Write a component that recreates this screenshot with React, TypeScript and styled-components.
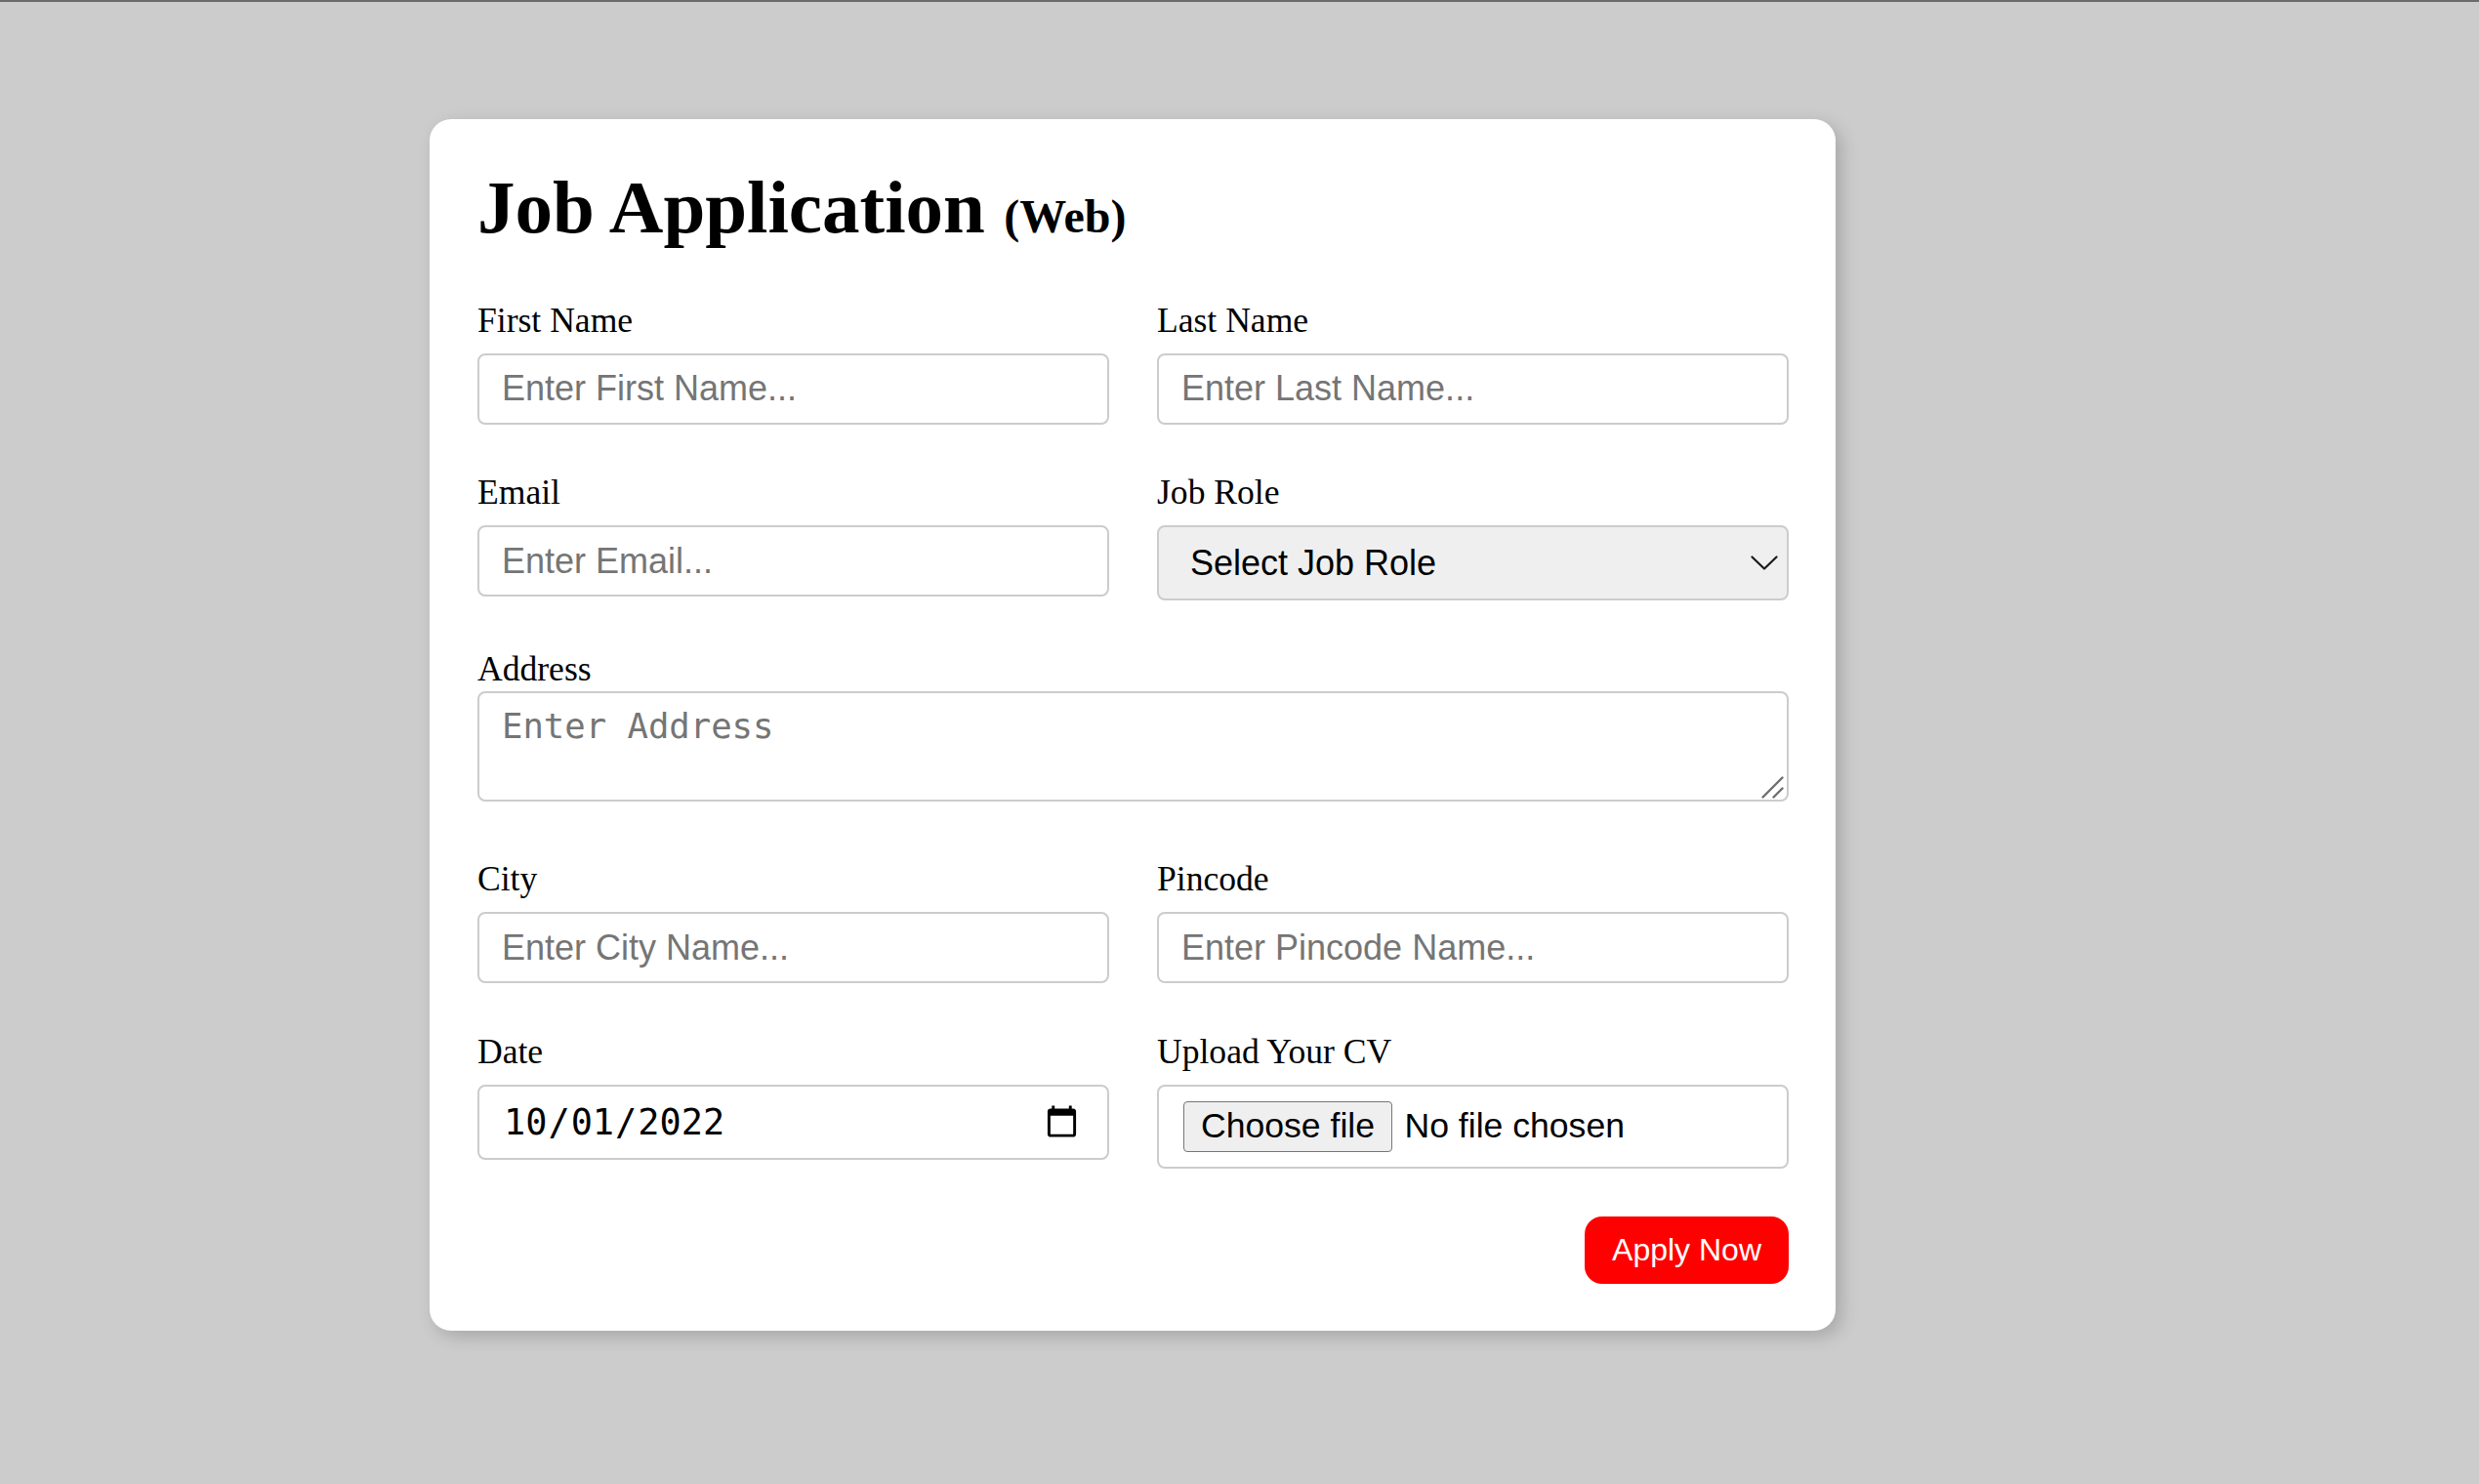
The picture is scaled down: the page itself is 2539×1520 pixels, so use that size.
import styled, { createGlobalStyle } from "styled-components";

const GlobalStyle = createGlobalStyle`
  html, body {
    margin: 0;
    padding: 0;
  }
  body {
    background: #cccccc;
    border-top: 2px solid #6b6b6b;
    font-family: "Liberation Serif", "Times New Roman", serif;
  }
`;

const Page = styled.div`
  min-height: 1518px;
  padding: 120px 0 0 440px;
  box-sizing: border-box;
`;

const Card = styled.form`
  width: 1440px;
  box-sizing: border-box;
  background: #ffffff;
  border-radius: 22px;
  padding: 46px 48px 48px 49px;
  box-shadow: 6px 6px 18px rgba(0, 0, 0, 0.18);
`;

const Title = styled.h1`
  margin: 0 0 49.5px;
  font-size: 77px;
  font-weight: bold;
  line-height: normal;
  color: #000;
`;

const Small = styled.span`
  font-size: 48px;
`;

const Grid = styled.div`
  display: grid;
  grid-template-columns: 1fr 1fr;
  column-gap: 49px;
  row-gap: 48.5px;
  align-items: start;
`;

const Field = styled.div<{ $wide?: boolean; $after?: number }>`
  display: flex;
  flex-direction: column;
  grid-column: ${(p) => (p.$wide ? "1 / -1" : "auto")};
  margin-bottom: ${(p) => p.$after ?? 0}px;
`;

const Label = styled.label<{ $gap?: number }>`
  font-size: 35.6px;
  line-height: normal;
  color: #000;
  margin-bottom: ${(p) => p.$gap ?? 13}px;
`;

const boxBase = `
  box-sizing: border-box;
  width: 100%;
  border: 2px solid #cccccc;
  border-radius: 8px;
  outline: none;
  margin: 0;
  color: #000;
`;

const TextInput = styled.input`
  ${boxBase}
  height: 73px;
  padding: 0 23px;
  font: 36px "Liberation Sans", Arial, sans-serif;
  background: #fff;

  &::placeholder {
    color: #757575;
  }
`;

const SelectWrap = styled.div`
  position: relative;
`;

const Select = styled.select`
  ${boxBase}
  display: block;
  appearance: none;
  height: 77px;
  padding: 0 60px 0 32px;
  font: 36px "Liberation Sans", Arial, sans-serif;
  background-color: #efefef;
`;

const Chevron = styled.svg`
  position: absolute;
  right: 11px;
  top: 31px;
  width: 28px;
  height: 15px;
  pointer-events: none;
`;

const AreaWrap = styled.div`
  position: relative;
`;

const TextArea = styled.textarea`
  ${boxBase}
  display: block;
  resize: none;
  height: 113px;
  padding: 13px 23px;
  font: 35.6px "DejaVu Sans Mono", "Liberation Mono", monospace;
  background: #fff;

  &::placeholder {
    color: #757575;
  }
`;

const Grip = styled.svg`
  position: absolute;
  right: 5px;
  bottom: 3px;
  width: 23px;
  height: 23px;
  pointer-events: none;
`;

const DateInput = styled.input`
  ${boxBase}
  height: 77px;
  padding: 0 26px 0 24px;
  font: 36.9px "DejaVu Sans Mono", "Liberation Mono", monospace;
  background: #fff;
`;

const FileBox = styled.label`
  ${boxBase}
  display: flex;
  align-items: center;
  gap: 12.5px;
  height: 86px;
  padding: 0 25px;
  font: 35.6px "Liberation Sans", Arial, sans-serif;
  background: #fff;
  cursor: pointer;
`;

const HiddenFile = styled.input`
  display: none;
`;

const FileButton = styled.span`
  display: flex;
  align-items: center;
  box-sizing: border-box;
  height: 52px;
  padding: 0 17px;
  border: 1.5px solid #767676;
  border-radius: 4px;
  background: #efefef;
  color: #000;
`;

const FileName = styled.span`
  color: #000;
`;

const ButtonRow = styled.div`
  display: flex;
  justify-content: flex-end;
  margin-top: 49px;
`;

const ApplyButton = styled.button`
  border: none;
  border-radius: 18px;
  background: #ff0000;
  color: #ffffff;
  font: 32px "Liberation Sans", Arial, sans-serif;
  padding: 16px 28px;
  line-height: normal;
  cursor: pointer;
`;

export default function App() {
  return (
    <>
      <GlobalStyle />
      <Page>
        <Card onSubmit={(e) => e.preventDefault()}>
          <Title>
            Job Application <Small>(Web)</Small>
          </Title>
          <Grid>
            <Field>
              <Label htmlFor="first">First Name</Label>
              <TextInput id="first" placeholder="Enter First Name..." />
            </Field>
            <Field>
              <Label htmlFor="last">Last Name</Label>
              <TextInput id="last" placeholder="Enter Last Name..." />
            </Field>
            <Field>
              <Label htmlFor="email">Email</Label>
              <TextInput id="email" type="email" placeholder="Enter Email..." />
            </Field>
            <Field>
              <Label htmlFor="role">Job Role</Label>
              <SelectWrap>
                <Select id="role" defaultValue="">
                  <option value="">Select Job Role</option>
                  <option value="frontend">Frontend Developer</option>
                  <option value="backend">Backend Developer</option>
                  <option value="fullstack">Full Stack Developer</option>
                </Select>
                <Chevron viewBox="0 0 28 15" fill="none">
                  <path
                    d="M1.5 1.5 L14 13.5 L26.5 1.5"
                    stroke="#1a1a1a"
                    strokeWidth="2.2"
                    strokeLinecap="round"
                    strokeLinejoin="round"
                  />
                </Chevron>
              </SelectWrap>
            </Field>
            <Field $wide $after={10}>
              <Label htmlFor="address" $gap={2}>
                Address
              </Label>
              <AreaWrap>
                <TextArea id="address" placeholder="Enter Address" />
                <Grip viewBox="0 0 23 23" fill="none">
                  <path
                    d="M1.5 21.5 L21.5 1.5 M12.5 21.5 L21.5 12.5"
                    stroke="#6e6e6e"
                    strokeWidth="2.4"
                    strokeLinecap="round"
                  />
                </Grip>
              </AreaWrap>
            </Field>
            <Field>
              <Label htmlFor="city">City</Label>
              <TextInput id="city" placeholder="Enter City Name..." />
            </Field>
            <Field>
              <Label htmlFor="pincode">Pincode</Label>
              <TextInput id="pincode" placeholder="Enter Pincode Name..." />
            </Field>
            <Field>
              <Label htmlFor="date">Date</Label>
              <DateInput id="date" type="date" defaultValue="2022-10-01" />
            </Field>
            <Field>
              <Label htmlFor="cv">Upload Your CV</Label>
              <FileBox htmlFor="cv">
                <HiddenFile id="cv" type="file" />
                <FileButton>Choose file</FileButton>
                <FileName>No file chosen</FileName>
              </FileBox>
            </Field>
          </Grid>
          <ButtonRow>
            <ApplyButton type="submit">Apply Now</ApplyButton>
          </ButtonRow>
        </Card>
      </Page>
    </>
  );
}
